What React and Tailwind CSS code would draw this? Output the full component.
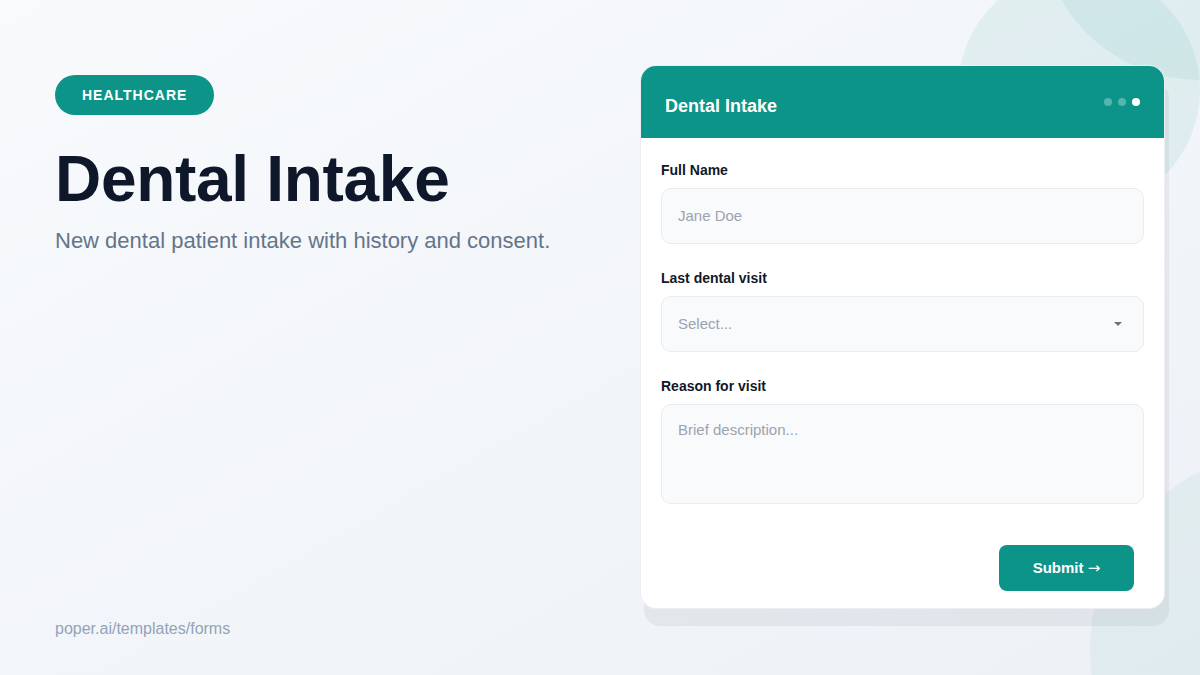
import React from "react";

const fields = [
    { id: "name", label: "Full Name", kind: "input", placeholder: "Jane Doe" },
    { id: "visit", label: "Last dental visit", kind: "select", placeholder: "Select..." },
    { id: "reason", label: "Reason for visit", kind: "textarea", placeholder: "Brief description..." },
];

const Field = ({ field }) => {
    return (
        <div className="flex flex-col">
            <label className="h-5 mb-2 text-sm font-bold leading-5 text-[#111827]">{field.label}</label>
            {field.kind === "textarea" ? (
                <div className="h-[100px] rounded-[10px] border border-[#e8ecf0] bg-[#f8fafc] px-4 pt-[14px] text-[15px] text-[#9ca3af]">
                    {field.placeholder}
                </div>
            ) : (
                <div className="h-14 rounded-[10px] border border-[#e8ecf0] bg-[#f8fafc] px-4 flex items-center justify-between text-[15px] text-[#9ca3af]">
                    <span>{field.placeholder}</span>
                    {field.kind === "select" && (
                        <svg width="10" height="6" viewBox="0 0 10 6" className="mr-[4px]">
                            <path d="M1 1 L9 1 L5 5 Z" fill="#6b7280" />
                        </svg>
                    )}
                </div>
            )}
        </div>
    );
};

const App = () => {
    return (
        <div
            className="relative w-[1200px] h-[675px] overflow-hidden bg-gradient-to-br from-[#f8fafc] to-[#edf1f6]"
            style={{ fontFamily: '"Liberation Sans", Arial, sans-serif' }}
        >
            {/* decorative circles */}
            <div className="absolute left-[958px] top-[-31px] w-[242px] h-[242px] rounded-full bg-[#0d9488]/[0.08]" />
            <div className="absolute left-[1040px] top-[-240px] w-[320px] h-[320px] rounded-full bg-[#0d9488]/[0.08]" />
            <div className="absolute left-[1090px] top-[450px] w-[400px] h-[400px] rounded-full bg-[#0d9488]/[0.06]" />

            <div className="relative flex h-full">
                <div className="w-[640px] shrink-0 pl-[55px] pt-[75px] pb-[34px] flex flex-col">
                    <div className="self-start h-10 px-[27px] rounded-full bg-[#0d9488] flex items-center text-sm font-bold tracking-[1px] text-white">
                        HEALTHCARE
                    </div>
                    <h1 className="mt-[26px] text-[64px] leading-[76px] font-bold tracking-[-0.3px] text-[#0f172a]">
                        Dental Intake
                    </h1>
                    <p className="mt-[8px] text-[22px] leading-8 text-[#64748b]">
                        New dental patient intake with history and consent.
                    </p>
                    <div className="mt-auto text-base text-[#94a3b8]">poper.ai/templates/forms</div>
                </div>

                <div className="mt-[65px] w-[525px] h-[544px] rounded-2xl bg-white border border-[#e5e7eb]/70 shadow-[4px_17px_0_rgba(15,23,42,0.055)] overflow-hidden flex flex-col">
                    <div className="h-[72px] shrink-0 bg-[#0d9488] px-6 flex items-center justify-between">
                        <span className="mt-2 text-lg font-bold text-white">Dental Intake</span>
                        <div className="flex items-center gap-[6px]">
                            <span className="w-2 h-2 rounded-full bg-white/30" />
                            <span className="w-2 h-2 rounded-full bg-white/30" />
                            <span className="w-2 h-2 rounded-full bg-white" />
                        </div>
                    </div>
                    <div className="px-5 pt-[22px] flex flex-col gap-6">
                        {fields.map((f) => (
                            <Field key={f.id} field={f} />
                        ))}
                    </div>
                    <div className="mt-[41px] pr-[30px] flex justify-end">
                        <button className="w-[135px] h-[46px] rounded-lg bg-[#0d9488] text-[15px] font-bold text-white">
                            Submit <span className="font-normal" style={{ fontFamily: '"DejaVu Sans", sans-serif' }}>→</span>
                        </button>
                    </div>
                </div>
            </div>
        </div>
    );
};

export default App;
